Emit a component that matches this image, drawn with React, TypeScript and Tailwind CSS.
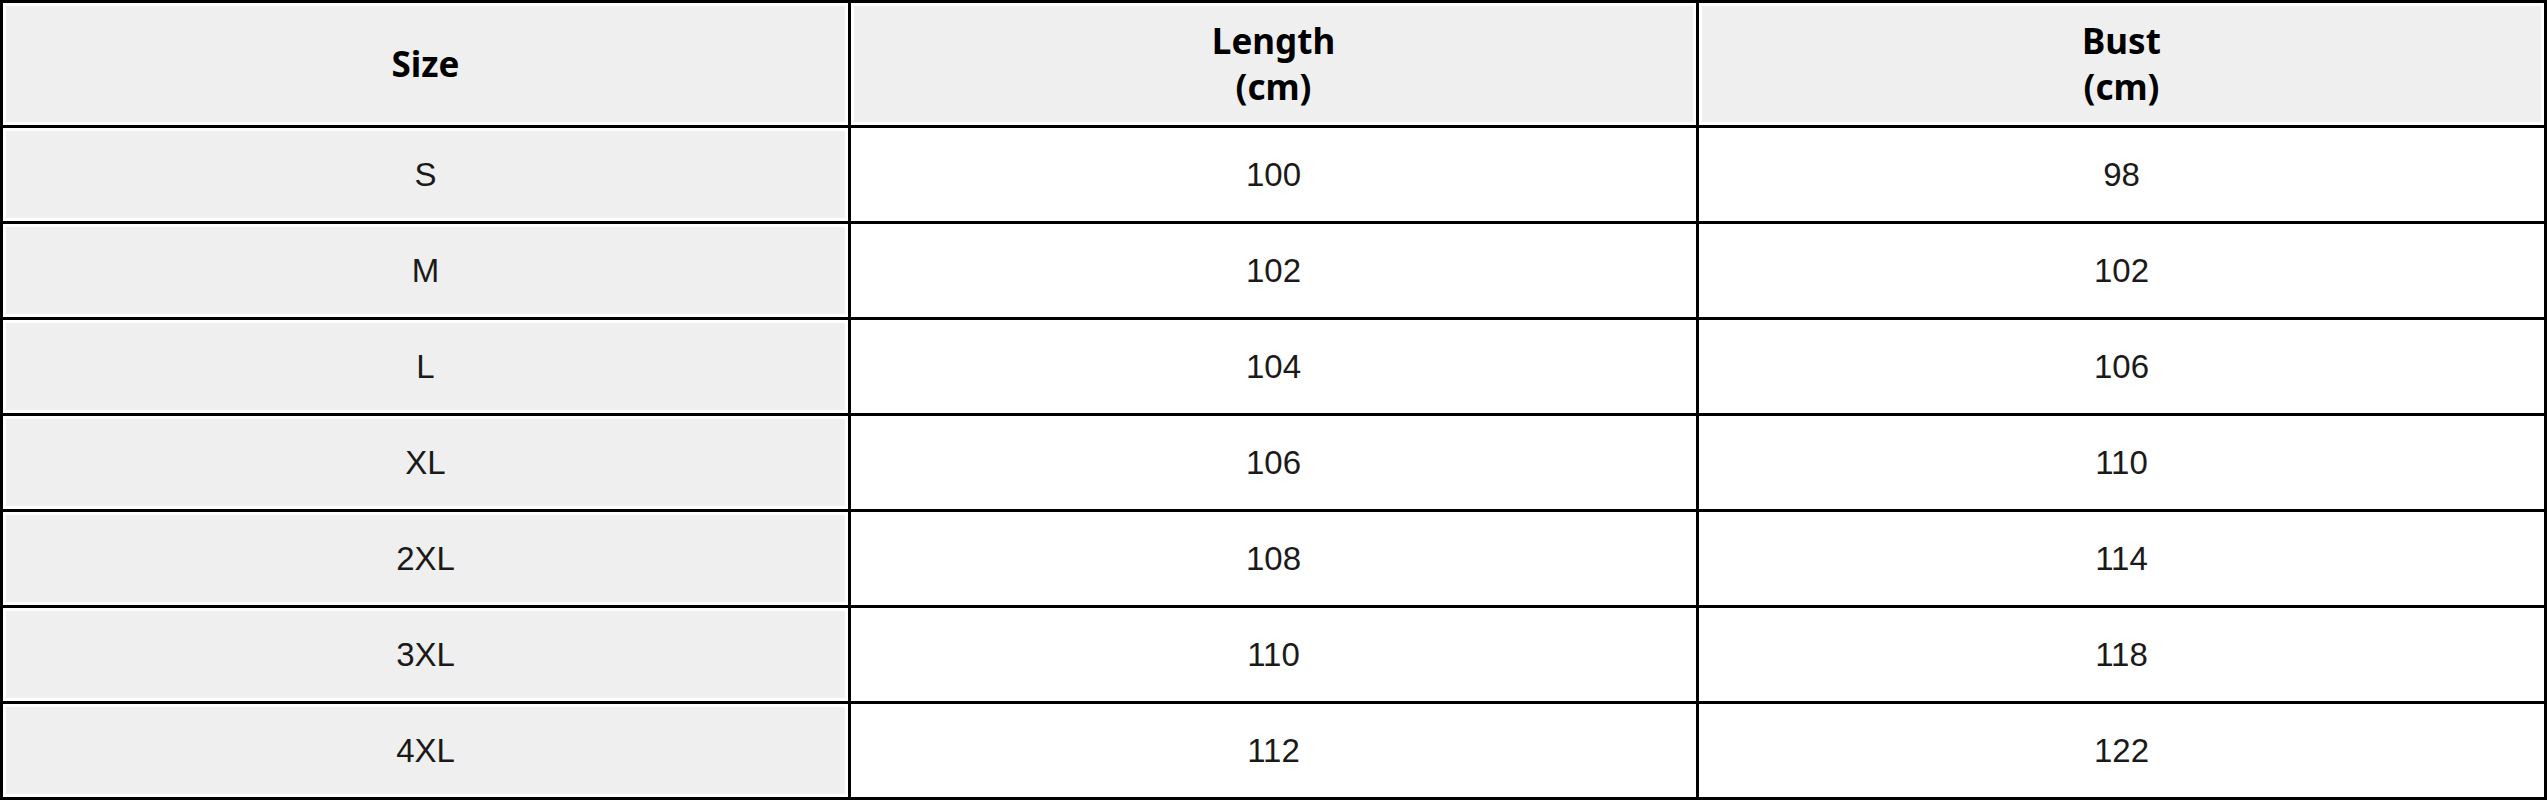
import { Fragment } from 'react'

const rows = [
  ['S', '100', '98'],
  ['M', '102', '102'],
  ['L', '104', '106'],
  ['XL', '106', '110'],
  ['2XL', '108', '114'],
  ['3XL', '110', '118'],
  ['4XL', '112', '122'],
]

export default function App() {
  return (
    <div className="h-[800px] w-[2547px] bg-white">
      <div className="grid h-full w-full grid-cols-3 grid-rows-[122px_repeat(7,93px)] gap-[3px] bg-black p-[3px]">
        {/* Header */}
        <div className="flex items-center justify-center border-[3px] border-white bg-[#efefef] text-[35px] font-bold leading-[46px] text-black [font-family:'Noto_Sans',sans-serif]">
          Size
        </div>
        <div className="flex flex-col items-center justify-center border-[3px] border-white bg-[#efefef] text-[35px] font-bold leading-[46px] text-black [font-family:'Noto_Sans',sans-serif]">
          <span>Length</span>
          <span>(cm)</span>
        </div>
        <div className="flex flex-col items-center justify-center border-[3px] border-white bg-[#efefef] text-[35px] font-bold leading-[46px] text-black [font-family:'Noto_Sans',sans-serif]">
          <span>Bust</span>
          <span>(cm)</span>
        </div>

        {/* Body */}
        {rows.map((r) => (
          <Fragment key={r[0]}>
            <div className="flex items-center justify-center border-[3px] border-white bg-[#efefef] text-[33px] text-[#1a1a1a] [font-family:'Liberation_Sans',Arial,sans-serif]">
              {r[0]}
            </div>
            <div className="flex items-center justify-center border-[3px] border-white bg-white text-[33px] text-[#1a1a1a] [font-family:'Liberation_Sans',Arial,sans-serif]">
              {r[1]}
            </div>
            <div className="flex items-center justify-center border-[3px] border-white bg-white text-[33px] text-[#1a1a1a] [font-family:'Liberation_Sans',Arial,sans-serif]">
              {r[2]}
            </div>
          </Fragment>
        ))}
      </div>
    </div>
  )
}
